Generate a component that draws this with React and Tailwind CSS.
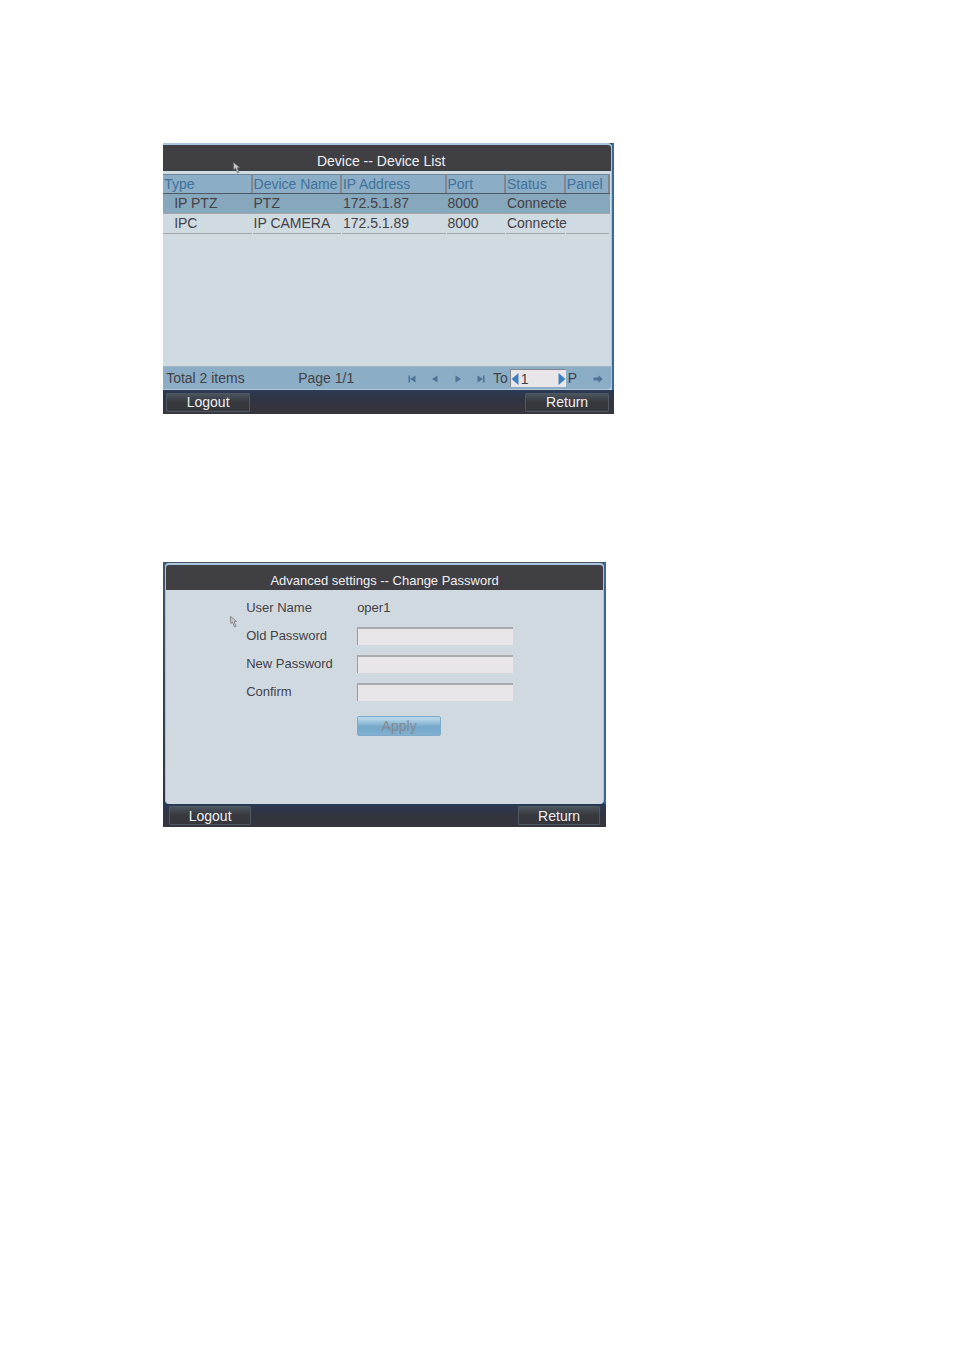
import React, { useState } from "react";

const devices = [
  { type: "IP PTZ", name: "PTZ", ip: "172.5.1.87", port: "8000", status: "Connecte", selected: true },
  { type: "IPC", name: "IP CAMERA", ip: "172.5.1.89", port: "8000", status: "Connecte", selected: false },
];

const headers = ["Type", "Device Name", "IP Address", "Port", "Status", "Panel"];

function Cursor({ className }) {
  return (
    <svg aria-hidden="true" className={className} width="7" height="12" viewBox="0 0 7 12">
      <path
        d="M0.5 0.5 L0.8 7.5 L2.6 6.2 L4.6 11 L6 10.4 L4.2 5.8 L6.6 5.4 Z"
        fill="#c9c9cc"
        stroke="#6b6b70"
        strokeWidth="0.7"
      />
    </svg>
  );
}

function PageButton({ label, children, className = "" }) {
  return (
    <button type="button" aria-label={label} className={`flex h-4 w-4 items-center justify-center ${className}`}>
      <svg width="10" height="8" viewBox="0 0 10 8" fill="#4f7297" aria-hidden="true">
        {children}
      </svg>
    </button>
  );
}

function BarButton({ children, className = "" }) {
  return (
    <button
      type="button"
      className={`flex h-[19px] items-center justify-center rounded-[1px] border border-[#4f5964] bg-linear-to-b from-[#4b545e] via-[#36383d] to-[#35373c] text-sm text-[#efeff1] ${className}`}
    >
      {children}
    </button>
  );
}

function BottomBar({ className = "", buttonClass }) {
  return (
    <footer
      className={`flex items-center justify-between bg-linear-to-b from-[#2a3a54] via-[#323440] to-[#37363b] ${className}`}
    >
      <BarButton className={buttonClass}>Logout</BarButton>
      <BarButton className={buttonClass}>Return</BarButton>
    </footer>
  );
}

function DeviceTable() {
  return (
    <table className="w-full table-fixed border-collapse text-left text-sm leading-[18px]">
      <colgroup>
        <col className="w-[20%]" />
        <col className="w-[20%]" />
        <col className="w-[23.4%]" />
        <col className="w-[13.3%]" />
        <col className="w-[13.4%]" />
        <col className="w-[9.9%]" />
      </colgroup>
      <thead>
        <tr className="bg-[#8badc6] text-[#41729b]">
          {headers.map((h) => (
            <th key={h} scope="col" className="border-b border-[#4c5a66] p-0 font-normal">
              <div className="h-[19px] border-r-2 border-t border-r-[#85878c] border-t-[#6f8798] pl-px whitespace-nowrap">
                {h}
              </div>
            </th>
          ))}
        </tr>
      </thead>
      <tbody className="text-[#434146]">
        {devices.map((d) => (
          <tr key={d.ip} className={d.selected ? "bg-[#86a7bc]" : ""}>
            {[d.type, d.name, d.ip, d.port, d.status, ""].map((value, i) => (
              <td key={i} className="p-0">
                <div
                  className={`mr-px h-5 border-b border-[#a3a5a8] whitespace-nowrap ${i === 0 ? "pl-[11px]" : "pl-px"}`}
                >
                  {value}
                </div>
              </td>
            ))}
          </tr>
        ))}
      </tbody>
    </table>
  );
}

function Pager() {
  const [page, setPage] = useState("1");
  return (
    <nav
      aria-label="Pages"
      className="flex h-6 items-center rounded-br border-t border-b border-t-[#9fb6c6] border-b-[#b3c8d6] bg-[#8badc6] pl-[3px] text-sm text-[#434146]"
    >
      <span className="w-[132px]">Total 2 items</span>
      <span>Page 1/1</span>
      <div className="ml-auto flex items-center gap-[7px] pt-px">
        <PageButton label="First page">
          <path d="M1.5 0.5h1.5v7h-1.5z M8.5 0.5v7L3 4z" />
        </PageButton>
        <PageButton label="Previous page">
          <path d="M7.5 0.5v7L2 4z" />
        </PageButton>
        <PageButton label="Next page">
          <path d="M2.5 0.5v7L8 4z" />
        </PageButton>
        <PageButton label="Last page">
          <path d="M1.5 0.5v7L7 4z M7 0.5h1.5v7h-1.5z" />
        </PageButton>
      </div>
      <label htmlFor="page" className="ml-1 mr-[2px]">
        To
      </label>
      <div className="flex h-[18px] w-14 items-center border-t border-l border-[#7f878d] bg-[#e8e6e9]">
        <button type="button" aria-label="Decrease page">
          <svg width="8" height="12" viewBox="0 0 8 12" fill="#3e7fc4" aria-hidden="true">
            <path d="M7.5 0v12L0.5 6z" />
          </svg>
        </button>
        <input
          id="page"
          value={page}
          onChange={(e) => setPage(e.target.value)}
          className="h-full w-full min-w-0 bg-transparent pl-[2px] outline-none"
        />
        <button type="button" aria-label="Increase page">
          <svg width="8" height="12" viewBox="0 0 8 12" fill="#3e7fc4" aria-hidden="true">
            <path d="M0.5 0v12L7.5 6z" />
          </svg>
        </button>
      </div>
      <span className="ml-[2px]">P</span>
      <PageButton label="Go to page" className="mr-[5px] ml-[13px] pt-px">
        <path d="M0.5 2.5h5V0.3L9.7 4 5.5 7.7V5.5h-5z" />
      </PageButton>
    </nav>
  );
}

function DeviceListWindow() {
  return (
    <section className="relative w-full max-w-[451px] bg-[#37363b]">
      <div className="border-r-2 border-[#3c68a3]">
        <div className="rounded-tr border-t-2 border-r border-[#a9c6dc] bg-[#d0dae1]">
          <h1 className="flex h-[26px] items-center justify-center rounded-tr-[3px] bg-[#403f44] pt-[10px] pr-3 pb-1 text-sm text-[#f1f1f3]">
            Device -- Device List
          </h1>
          <div className="min-h-[195px] pt-[3px] pr-px">
            <DeviceTable />
          </div>
          <Pager />
        </div>
      </div>
      <BottomBar className="h-6 pr-[5px] pl-[3px]" buttonClass="w-[84px]" />
      <Cursor className="absolute top-[19px] left-[70px]" />
    </section>
  );
}

function PasswordField({ id, label }) {
  return (
    <div className="flex h-7 items-center">
      <label htmlFor={id} className="w-[111px]">
        {label}
      </label>
      <input
        id={id}
        type="password"
        className="h-[18px] w-[156px] border-t-2 border-l border-t-[#a9abaf] border-l-[#9c9ea2] bg-[#e8e6e9] px-1 outline-none"
      />
    </div>
  );
}

function ChangePasswordWindow() {
  return (
    <section className="relative w-full max-w-[443px] bg-[#37363b]">
      <div className="bg-linear-to-b from-[#42566c] to-[#2c3448] pt-px pl-[2px]">
        <div className="border-r-2 border-[#3c6499]">
          <div className="min-h-[241px] rounded border-t-2 border-r border-l border-[#a9c6dc] bg-[#d0d9e0]">
            <h2 className="flex h-[25px] items-center justify-center rounded-t-[3px] bg-[#403f44] pt-[6px] text-[13px] text-[#f1f1f3]">
              Advanced settings -- Change Password
            </h2>
            <form onSubmit={(e) => e.preventDefault()} className="pt-1 pl-20 text-[13px] text-[#434146]">
              <div className="flex h-7 items-center">
                <span className="w-[111px]">User Name</span>
                <span>oper1</span>
              </div>
              <PasswordField id="old-password" label="Old Password" />
              <PasswordField id="new-password" label="New Password" />
              <PasswordField id="confirm" label="Confirm" />
              <button
                type="submit"
                className="mt-[10px] ml-[111px] flex h-5 w-[84px] items-center justify-center rounded-[2px] border border-[#7fabc9] bg-linear-to-b from-[#b4d5e8] from-10% via-[#74a7ca] via-55% to-[#80b0d1] text-sm text-[#84898f]"
              >
                Apply
              </button>
            </form>
          </div>
        </div>
      </div>
      <BottomBar className="h-[23px] px-[6px]" buttonClass="w-[82px]" />
      <Cursor className="absolute top-[54px] left-[67px]" />
    </section>
  );
}

export default function App() {
  return (
    <main
      className="flex min-h-screen flex-col gap-[148px] bg-white px-[17.1%] pt-[143px] pb-16"
      style={{ fontFamily: '"Liberation Sans", Arial, sans-serif' }}
    >
      <DeviceListWindow />
      <ChangePasswordWindow />
    </main>
  );
}
